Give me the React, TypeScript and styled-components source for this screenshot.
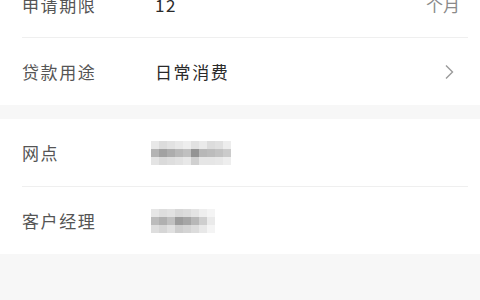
import React from "react";
import styled, { createGlobalStyle } from "styled-components";

const Global = createGlobalStyle`
  html, body { margin: 0; padding: 0; background: #f7f7f7; }
  body { font-family: "Noto Sans CJK SC", "Noto Sans", sans-serif; overflow: hidden; }
`;

const Page = styled.div`
  width: 480px;
  height: 300px;
  background: #f7f7f7;
  display: flex;
  flex-direction: column;
  overflow: hidden;
`;

const Section = styled.div<{ $gapTop?: number }>`
  background: #fff;
  margin-top: ${(p) => p.$gapTop ?? 0}px;
  display: flex;
  flex-direction: column;
  flex-shrink: 0;
`;

const TopSection = styled(Section)`
  margin-top: -29px;
`;

const Row = styled.div<{ $divider?: boolean; $h?: number }>`
  height: ${(p) => p.$h ?? 66}px;
  margin-left: 22px;
  margin-right: 12px;
  padding-right: 8px;
  display: flex;
  align-items: center;
  border-bottom: ${(p) => (p.$divider ? "1px solid #efefef" : "none")};
`;

const Label = styled.div`
  width: 133px;
  font-size: 17px;
  color: #555;
  letter-spacing: 1.6px;
`;

const Value = styled.div`
  flex: 1;
  font-size: 17px;
  color: #2a2a2a;
  letter-spacing: 1.6px;
`;

const Unit = styled.div`
  font-size: 17px;
  color: #8a8a8a;
`;

const Chevron = styled.svg`
  width: 10px;
  height: 16px;
  margin-right: 6px;
`;

const Mosaic = styled.div<{ $cols: number }>`
  display: grid;
  grid-template-columns: repeat(${(p) => p.$cols}, 8px);
  grid-auto-rows: 8px;
  filter: blur(0.6px);
  margin-left: -4px;
`;

const Cell = styled.div<{ $c: string }>`
  background: ${(p) => p.$c};
`;

const shades1 = [
  ["#e8e8e8", "#dcdcdc", "#e2e2e2", "#e8e8e8", "#eeeeee", "#e2e2e2", "#eaeaea", "#dcdcdc", "#e0e0e0", "#ededed"],
  ["#b4b4b4", "#a2a2a2", "#adadad", "#b8b8b8", "#c0c0c0", "#949494", "#b8b8b8", "#bcbcbc", "#c2c2c2", "#cbcbcb"],
  ["#e4e4e4", "#dadada", "#dedede", "#e2e2e2", "#e8e8e8", "#d0d0d0", "#e6e6e6", "#e6e6e6", "#e8e8e8", "#eeeeee"],
];

const shades2 = [
  ["#e6e6e6", "#dedede", "#e2e2e2", "#d8d8d8", "#dcdcdc", "#e4e4e4", "#eeeeee", "#f4f4f4"],
  ["#bcbcbc", "#b0b0b0", "#c0c0c0", "#9c9c9c", "#a6a6a6", "#b8b8b8", "#cecece", "#eaeaea"],
  ["#dedede", "#d6d6d6", "#e0e0e0", "#cecece", "#d4d4d4", "#dcdcdc", "#e8e8e8", "#f4f4f4"],
];

const Pixelated = ({ grid }: { grid: string[][] }) => (
  <Mosaic $cols={grid[0].length}>
    {grid.flat().map((c, i) => (
      <Cell key={i} $c={c} />
    ))}
  </Mosaic>
);

export default function App() {
  return (
    <Page>
      <Global />
      <TopSection>
        <Row $divider $h={66}>
          <Label>申请期限</Label>
          <Value>12</Value>
          <Unit>个月</Unit>
        </Row>
        <Row $h={67}>
          <Label>贷款用途</Label>
          <Value>日常消费</Value>
          <Chevron viewBox="0 0 10 16">
            <path d="M2 1.5 L8.5 8 L2 14.5" fill="none" stroke="#9a9a9a" strokeWidth="1.4" />
          </Chevron>
        </Row>
      </TopSection>
      <Section $gapTop={14}>
        <Row $divider $h={67}>
          <Label>网点</Label>
          <Pixelated grid={shades1} />
        </Row>
        <Row $h={67}>
          <Label>客户经理</Label>
          <Pixelated grid={shades2} />
        </Row>
      </Section>
    </Page>
  );
}
